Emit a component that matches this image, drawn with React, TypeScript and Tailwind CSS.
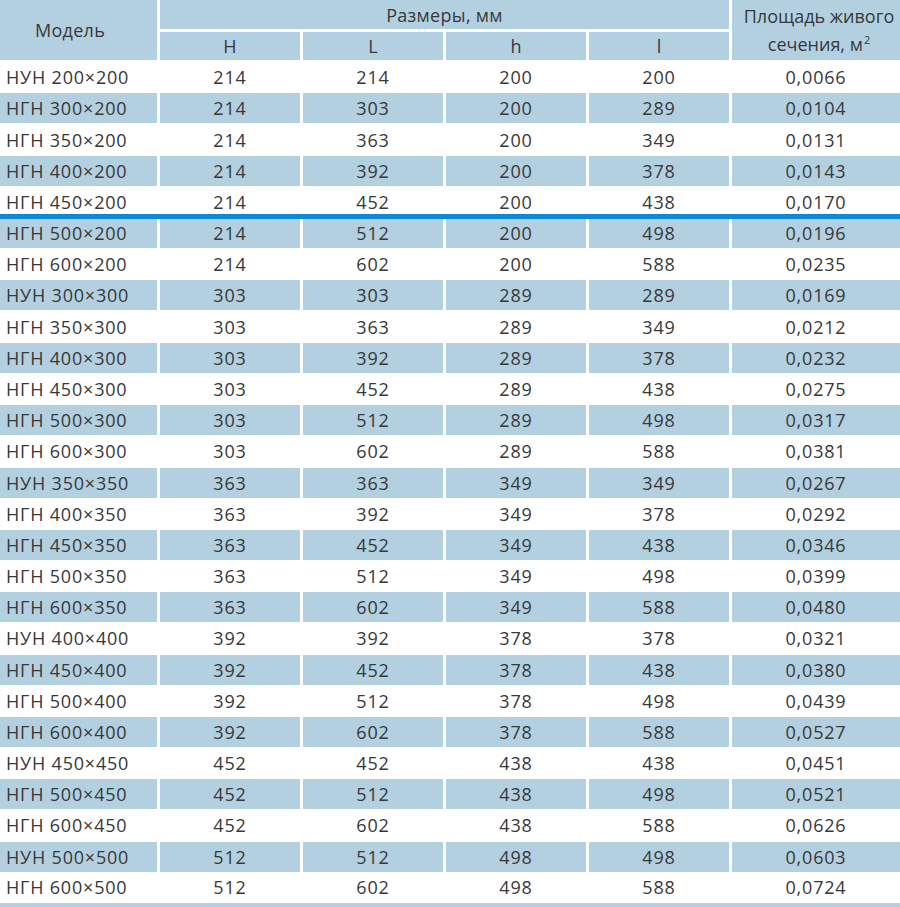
import React from "react";

type Row = [string, number, number, number, number, string];

const rows: Row[] = [
  ["НУН 200×200", 214, 214, 200, 200, "0,0066"],
  ["НГН 300×200", 214, 303, 200, 289, "0,0104"],
  ["НГН 350×200", 214, 363, 200, 349, "0,0131"],
  ["НГН 400×200", 214, 392, 200, 378, "0,0143"],
  ["НГН 450×200", 214, 452, 200, 438, "0,0170"],
  ["НГН 500×200", 214, 512, 200, 498, "0,0196"],
  ["НГН 600×200", 214, 602, 200, 588, "0,0235"],
  ["НУН 300×300", 303, 303, 289, 289, "0,0169"],
  ["НГН 350×300", 303, 363, 289, 349, "0,0212"],
  ["НГН 400×300", 303, 392, 289, 378, "0,0232"],
  ["НГН 450×300", 303, 452, 289, 438, "0,0275"],
  ["НГН 500×300", 303, 512, 289, 498, "0,0317"],
  ["НГН 600×300", 303, 602, 289, 588, "0,0381"],
  ["НУН 350×350", 363, 363, 349, 349, "0,0267"],
  ["НГН 400×350", 363, 392, 349, 378, "0,0292"],
  ["НГН 450×350", 363, 452, 349, 438, "0,0346"],
  ["НГН 500×350", 363, 512, 349, 498, "0,0399"],
  ["НГН 600×350", 363, 602, 349, 588, "0,0480"],
  ["НУН 400×400", 392, 392, 378, 378, "0,0321"],
  ["НГН 450×400", 392, 452, 378, 438, "0,0380"],
  ["НГН 500×400", 392, 512, 378, 498, "0,0439"],
  ["НГН 600×400", 392, 602, 378, 588, "0,0527"],
  ["НУН 450×450", 452, 452, 438, 438, "0,0451"],
  ["НГН 500×450", 452, 512, 438, 498, "0,0521"],
  ["НГН 600×450", 452, 602, 438, 588, "0,0626"],
  ["НУН 500×500", 512, 512, 498, 498, "0,0603"],
  ["НГН 600×500", 512, 602, 498, 588, "0,0724"],
];

function DataRow({ row, index }: { row: Row; index: number }) {
  const blue = index % 2 === 1;
  const last = index === rows.length - 1;
  const h = blue ? "h-[30px]" : last ? "h-[31px]" : "h-[32.37px]";
  const bg = blue ? "bg-[#b3d0e1]" : "";
  return (
    <div className={`grid grid-cols-[157px_140px_140px_140px_140px_1fr] gap-x-[3px] tracking-[0.8px] ${h}`}>
      <div className={`flex items-center pl-[6px] ${bg}`}>{row[0]}</div>
      <div className={`flex items-center justify-center ${bg}`}>{row[1]}</div>
      <div className={`flex items-center justify-center ${bg}`}>{row[2]}</div>
      <div className={`flex items-center justify-center ${bg}`}>{row[3]}</div>
      <div className={`flex items-center justify-center ${bg}`}>{row[4]}</div>
      <div className={`flex items-center justify-center ${bg}`}>{row[5]}</div>
    </div>
  );
}

export default function App() {
  return (
    <div
      className="w-[900px] h-[907px] overflow-hidden bg-white text-[#383838] text-[18px] leading-none"
      style={{ fontFamily: '"Open Sans", "Noto Sans", sans-serif' }}
    >
      <div className="grid grid-cols-[157px_140px_140px_140px_140px_1fr] grid-rows-[29px_28px] gap-x-[3px] gap-y-[3px] mb-[1px]">
        <div className="row-span-2 col-start-1 row-start-1 bg-[#b3d0e1] flex items-center justify-center pr-[17px] tracking-[0.3px]">
          Модель
        </div>
        <div className="col-start-2 col-span-4 row-start-1 bg-[#b3d0e1] flex items-center justify-center tracking-[0.3px]">
          Размеры, мм
        </div>
        <div className="col-start-2 row-start-2 bg-[#b3d0e1] flex items-center justify-center">H</div>
        <div className="col-start-3 row-start-2 bg-[#b3d0e1] flex items-center justify-center">L</div>
        <div className="col-start-4 row-start-2 bg-[#b3d0e1] flex items-center justify-center">h</div>
        <div className="col-start-5 row-start-2 bg-[#b3d0e1] flex items-center justify-center">l</div>
        <div className="col-start-6 row-span-2 row-start-1 bg-[#b3d0e1] flex flex-col items-center justify-center pl-[6px] gap-y-[10px]">
          <span className="leading-none">Площадь живого</span>
          <span className="leading-none">
            сечения, м
            <span className="inline-block text-[11px] leading-none relative -top-[7px] ml-[1px]">2</span>
          </span>
        </div>
      </div>
      {rows.map((r, i) => (
        <React.Fragment key={r[0]}>
          <DataRow row={r} index={i} />
          {i === 4 && <div className="relative h-[5px] -mt-[4px] -mb-[1px] bg-[#0a8ad5]" />}
        </React.Fragment>
      ))}
      <div className="h-[5px] bg-[#b3d0e1]" />
    </div>
  );
}
